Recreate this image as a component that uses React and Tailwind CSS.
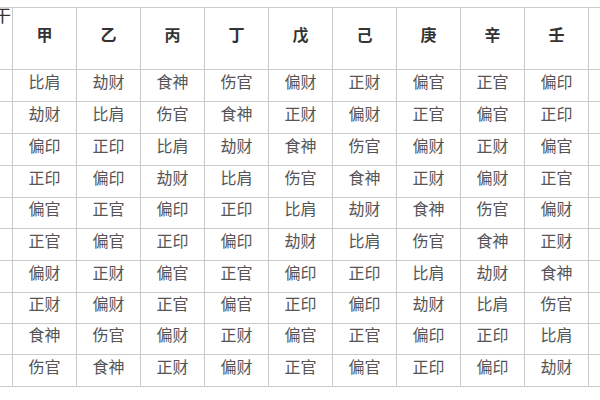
const heads = ["甲", "乙", "丙", "丁", "戊", "己", "庚", "辛", "壬"];

const rows = [
  ["比肩", "劫财", "食神", "伤官", "偏财", "正财", "偏官", "正官", "偏印"],
  ["劫财", "比肩", "伤官", "食神", "正财", "偏财", "正官", "偏官", "正印"],
  ["偏印", "正印", "比肩", "劫财", "食神", "伤官", "偏财", "正财", "偏官"],
  ["正印", "偏印", "劫财", "比肩", "伤官", "食神", "正财", "偏财", "正官"],
  ["偏官", "正官", "偏印", "正印", "比肩", "劫财", "食神", "伤官", "偏财"],
  ["正官", "偏官", "正印", "偏印", "劫财", "比肩", "伤官", "食神", "正财"],
  ["偏财", "正财", "偏官", "正官", "偏印", "正印", "比肩", "劫财", "食神"],
  ["正财", "偏财", "正官", "偏官", "正印", "偏印", "劫财", "比肩", "伤官"],
  ["食神", "伤官", "偏财", "正财", "偏官", "正官", "偏印", "正印", "比肩"],
  ["伤官", "食神", "正财", "偏财", "正官", "偏官", "正印", "偏印", "劫财"],
];

export default function App() {
  return (
    <div className="w-[600px] h-[400px] overflow-hidden bg-white pt-[7px] font-['Noto_Sans_CJK_SC','Noto_Sans',sans-serif]">
      <div className="grid grid-cols-[12px_repeat(10,63px)] grid-rows-[61px_31px_31px_31px_31px_30px_31px_31px_30px_30px_31px] gap-px py-px bg-[#cbcbcb] w-max">
        {/* corner cell, only the tail of its label shows */}
        <div className="bg-white flex justify-end items-start overflow-hidden">
          <span className="text-[17px] leading-none text-[#333] -mt-[2px] pr-[1px] whitespace-nowrap">干</span>
        </div>
        {heads.map((h) => (
          <div key={h} className="bg-white flex items-center justify-center pb-[10px]">
            <span className="text-[16px] leading-none font-bold text-[#333]">{h}</span>
          </div>
        ))}
        <div className="bg-white" />

        {rows.map((r, i) => (
          <>
            <div key={"l" + i} className="bg-white" />
            {r.map((c, j) => (
              <div key={i + "-" + j} className="bg-white flex items-center justify-center pb-[10px]">
                <span className="text-[16px] leading-none text-[#555]">{c}</span>
              </div>
            ))}
            <div key={"r" + i} className="bg-white" />
          </>
        ))}
      </div>
    </div>
  );
}
